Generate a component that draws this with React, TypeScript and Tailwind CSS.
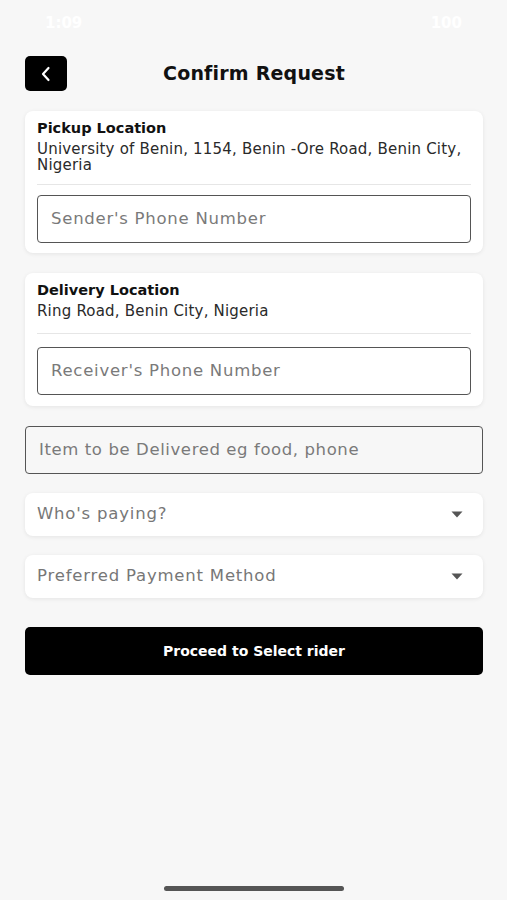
import React from "react";

const Caret = () => (
  <svg width="12" height="7" viewBox="0 0 12 7" className="shrink-0">
    <path d="M0.5 0.5 L11.5 0.5 L6 6.5 Z" fill="#555" />
  </svg>
);

export default function App() {
  return (
    <div
      className="w-[507px] h-[900px] bg-[#f7f7f7] flex flex-col relative overflow-hidden"
      style={{ fontFamily: '"DejaVu Sans", "Liberation Sans", sans-serif' }}
    >
      <div className="h-[46px] flex items-center justify-between px-[45px] text-white text-[15px] font-semibold">
        <span>1:09</span>
        <span>100</span>
      </div>
      <div className="h-[35px] mt-[10px] ml-[25px] w-[458px] flex items-center relative">
        <button className="w-[42px] h-[35px] bg-black rounded-[5px] flex items-center justify-center">
          <svg width="14" height="16" viewBox="0 0 14 16">
            <path d="M9.5 2 L4 8 L9.5 14" stroke="white" strokeWidth="2.2" fill="none" strokeLinecap="round" strokeLinejoin="round" />
          </svg>
        </button>
        <div className="absolute left-0 right-0 text-center pointer-events-none text-[19px] font-bold text-[#111] tracking-[0.2px]">
          Confirm Request
        </div>
      </div>

      <div className="ml-[25px] w-[458px] mt-[20px] flex flex-col">
        <div className="bg-white rounded-[8px] shadow-[0_1px_4px_rgba(0,0,0,0.08)] px-[12px] pt-[8px] pb-[10px]">
          <div className="text-[14.5px] font-bold text-[#111] leading-[18px]">Pickup Location</div>
          <div className="text-[15px] text-[#2a2a2a] leading-[16px] mt-[4px] tracking-[0.2px]">
            University of Benin, 1154, Benin -Ore Road, Benin City, Nigeria
          </div>
          <div className="h-px bg-[#e6e6e6] mt-[11px]" />
          <div className="mt-[10px] h-[48px] border border-[#555] rounded-[4px] flex items-center px-[13px] text-[16.5px] tracking-[0.75px] text-[#7a7a7a]">
            Sender's Phone Number
          </div>
        </div>

        <div className="bg-white rounded-[8px] shadow-[0_1px_4px_rgba(0,0,0,0.08)] px-[12px] pt-[8px] pb-[11px] mt-[20px]">
          <div className="text-[14.5px] font-bold text-[#111] leading-[18px]">Delivery Location</div>
          <div className="text-[15px] text-[#2a2a2a] leading-[16px] mt-[4px] tracking-[0.2px]">Ring Road, Benin City, Nigeria</div>
          <div className="h-px bg-[#e6e6e6] mt-[14px]" />
          <div className="mt-[13px] h-[48px] border border-[#555] rounded-[4px] flex items-center px-[13px] text-[16.5px] tracking-[0.75px] text-[#7a7a7a]">
            Receiver's Phone Number
          </div>
        </div>

        <div className="mt-[20px] h-[48px] border border-[#555] rounded-[4px] flex items-center px-[13px] text-[16.5px] tracking-[0.6px] text-[#7a7a7a]">
          Item to be Delivered eg food, phone
        </div>

        <div className="mt-[19px] h-[43px] bg-white rounded-[8px] shadow-[0_1px_4px_rgba(0,0,0,0.08)] flex items-center justify-between pl-[12px] pr-[20px] text-[16.5px] tracking-[0.8px] text-[#777]">
          <span>Who's paying?</span>
          <Caret />
        </div>

        <div className="mt-[19px] h-[43px] bg-white rounded-[8px] shadow-[0_1px_4px_rgba(0,0,0,0.08)] flex items-center justify-between pl-[12px] pr-[20px] text-[16.5px] tracking-[0.8px] text-[#777]">
          <span>Preferred Payment Method</span>
          <Caret />
        </div>

        <button className="mt-[29px] h-[48px] bg-black rounded-[5px] text-white text-[14px] font-bold flex items-center justify-center">
          Proceed to Select rider
        </button>
      </div>

      <div className="absolute left-[164px] top-[886px] w-[180px] h-[5px] rounded-full bg-[#555]" />
    </div>
  );
}
